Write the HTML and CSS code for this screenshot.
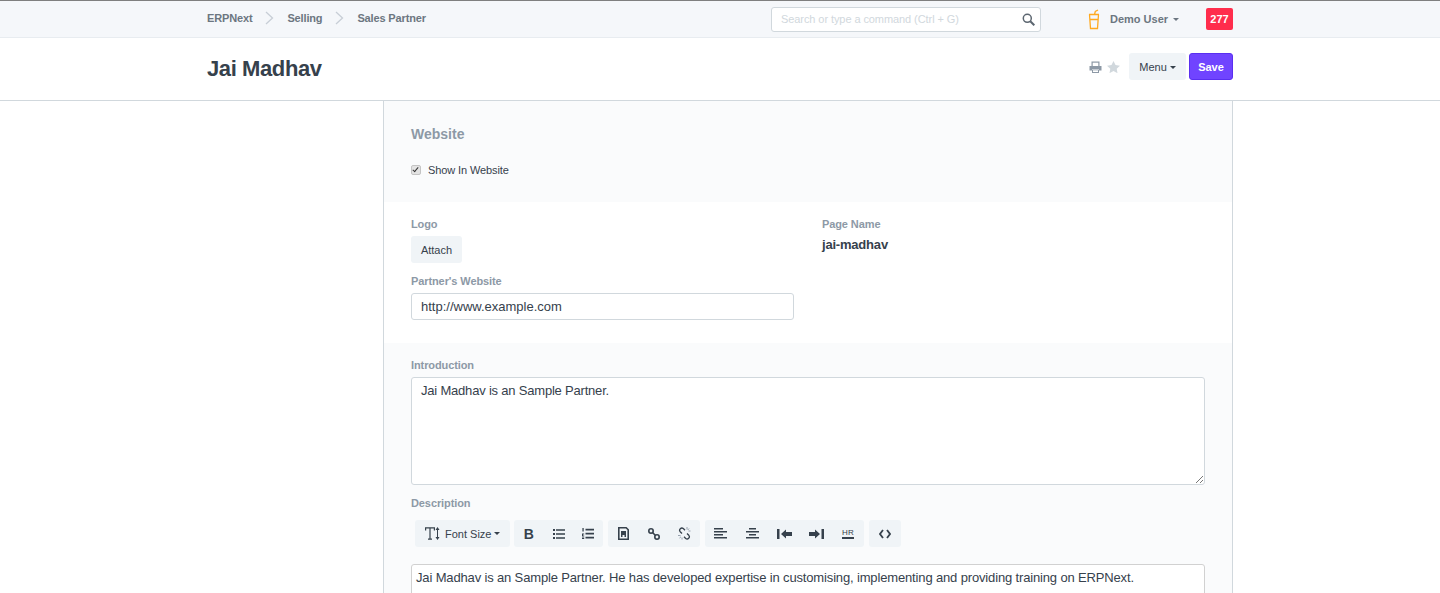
FILE: index.html
```html
<!DOCTYPE html>
<html lang="en">
<head>
    <meta charset="UTF-8">
    <title>Jai Madhav</title>
    <link rel="stylesheet" href="styles.css">
</head>
<body>
    <header class="navbar">
        <div class="wrap navbar-inner">
            <nav class="crumbs">
                <a>ERPNext</a>
                <svg class="crumb-sep" width="9" height="14" viewBox="0 0 9 14"><path d="M1 1l6.500 6-6.500 6" fill="none" stroke="#c8ced6" stroke-width="1.300"/></svg>
                <a>Selling</a>
                <svg class="crumb-sep" width="9" height="14" viewBox="0 0 9 14"><path d="M1 1l6.500 6-6.500 6" fill="none" stroke="#c8ced6" stroke-width="1.300"/></svg>
                <a>Sales Partner</a>
            </nav>
            <div class="search">
                <span>Search or type a command (Ctrl + G)</span>
                <svg width="13" height="13" viewBox="0 0 13 13"><circle cx="5.300" cy="5.300" r="4" fill="none" stroke="#5c6670" stroke-width="1.500"/><path d="M8.300 8.300l4 4" stroke="#5c6670" stroke-width="2"/></svg>
            </div>
            <div class="user">
                <svg width="12" height="21" viewBox="0 0 12 21"><path d="M1 5.500h10M1.500 5.500l1 14h7l1-14M1.800 10.500h8.400M6.500 5.500l.8-3 2.700-1.500" fill="none" stroke="#ffa91f" stroke-width="1.300"/></svg>
                <span class="user-name">Demo User</span>
                <i class="caret caret-grey"></i>
            </div>
            <div class="badge">277</div>
        </div>
    </header>

    <section class="title-bar">
        <div class="wrap title-inner">
            <h1>Jai Madhav</h1>
            <div class="actions">
                <svg class="print" width="13" height="12" viewBox="0 0 13 12"><path d="M2.500 5V.5h8V5h2v4.500H10V8H3v1.500H.5V5z" fill="#8d99a6"/><path d="M3.700 1.700h5.600V5H3.700z" fill="#fff"/><path d="M3 8.500h7v3.500H3z" fill="#8d99a6"/><path d="M4 9.300h5v1.700H4z" fill="#fff"/></svg>
                <svg class="star" width="13" height="12" viewBox="0 0 13 12"><path d="M6.500 0l2 4.100 4.500.6-3.300 3.100.8 4.400-4-2.200-4 2.200.8-4.400L0 4.700l4.500-.6z" fill="#d1d8dd"/></svg>
                <button class="btn btn-menu">Menu<i class="caret"></i></button>
                <button class="btn btn-save">Save</button>
            </div>
        </div>
    </section>

    <div class="wrap page-body">
        <main class="form-page">
            <section class="band band-tint band-website">
                <h2>Website</h2>
                <label class="check"><input type="checkbox" checked> Show In Website</label>
            </section>

            <section class="band band-fields">
                <div class="col">
                    <div class="field-label">Logo</div>
                    <button class="btn btn-attach">Attach</button>
                    <div class="field-label label-partner">Partner's Website</div>
                    <div class="input">http://www.example.com</div>
                </div>
                <div class="col">
                    <div class="field-label">Page Name</div>
                    <div class="page-name">jai-madhav</div>
                </div>
            </section>

            <section class="band band-tint band-intro">
                <div class="field-label">Introduction</div>
                <div class="input textarea">Jai Madhav is an Sample Partner.
                    <svg class="grip" width="9" height="9" viewBox="0 0 9 9"><path d="M1 8l7-7M5 8l3-3" stroke="#777" stroke-width="1"/></svg>
                </div>
                <div class="field-label label-desc">Description</div>
                <div class="toolbar">
                    <div class="tool-group group-font">
                        <span class="tool tool-font">
                            <svg width="15" height="13" viewBox="0 0 15 13"><path d="M.6 3.500V.8h8.800v2.700M5 .8v11.400M3 12.200h4" fill="none" stroke="#36414c" stroke-width="1.200"/><path d="M12.500 2v9" stroke="#36414c" stroke-width="1"/><path d="M10.500 3l2-3 2 3zM10.500 10l2 3 2-3z" fill="#36414c"/></svg>
                            <span>Font Size</span><i class="caret"></i>
                        </span>
                    </div>
                    <div class="tool-group group-style">
                        <span class="tool tool-bold">B</span>
                        <span class="tool">
                            <svg width="12" height="10" viewBox="0 0 12 10"><path d="M0 0h2v2H0zM0 4h2v2H0zM0 8h2v2H0zM3 .2h9v1.600H3zM3 4.200h9v1.600H3zM3 8.200h9v1.600H3z" fill="#36414c"/></svg>
                        </span>
                        <span class="tool">
                            <svg width="12" height="11" viewBox="0 0 12 11"><path d="M.4 0h1.300v3.500H.4zM0 5.500h2.200v1H1v1h1.200v1H0zM0 9.500h2.200V11H0zM3.500 .8H12v1.600H3.500zM3.500 4.800H12v1.600H3.500zM3.500 8.800H12v1.600H3.500z" fill="#36414c"/></svg>
                        </span>
                    </div>
                    <div class="tool-group group-link">
                        <span class="tool">
                            <svg width="11" height="13" viewBox="0 0 11 13"><path d="M.8.8h7.400l2 2v9.400H.8z" fill="none" stroke="#36414c" stroke-width="1.600"/><path d="M3 10V4h5v6H6.500V8h-2v2z" fill="#36414c"/></svg>
                        </span>
                        <span class="tool">
                            <svg width="12" height="12" viewBox="0 0 12 12"><circle cx="3" cy="3" r="2.200" fill="none" stroke="#36414c" stroke-width="1.600"/><circle cx="9" cy="9" r="2.200" fill="none" stroke="#36414c" stroke-width="1.600"/><path d="M4.500 4.500l3 3" stroke="#36414c" stroke-width="1.600"/></svg>
                        </span>
                        <span class="tool">
                            <svg width="13" height="13" viewBox="0 0 13 13"><path d="M4 6.500L2.200 4.700A2.200 2.200 0 0 1 5.300 1.600L7 3.300M9 6.500l1.800 1.800a2.200 2.200 0 0 1-3.100 3.100L6 9.700" fill="none" stroke="#36414c" stroke-width="1.300"/><path d="M9 0v2.500M11 1.500L9.800 3M12.500 4H10.500M0 8.500h2.500M1.500 11L3 9.800M4 12.500V10.500" stroke="#8d99a6" stroke-width="0.900"/></svg>
                        </span>
                    </div>
                    <div class="tool-group group-align">
                        <span class="tool">
                            <svg width="13" height="11" viewBox="0 0 13 11"><path d="M0 0h9v1.500H0zM0 3h13v1.500H0zM0 6h9v1.500H0zM0 9h13v1.500H0z" fill="#36414c"/></svg>
                        </span>
                        <span class="tool">
                            <svg width="13" height="11" viewBox="0 0 13 11"><path d="M3 0h7v1.500H3zM0 3h13v1.500H0zM3 6h7v1.500H3zM0 9h13v1.500H0z" fill="#36414c"/></svg>
                        </span>
                        <span class="tool">
                            <svg width="15" height="10" viewBox="0 0 15 10"><path d="M0 0h2.500v10H0zM4 5l5-4.500V3h6v4H9v2.500z" fill="#36414c"/></svg>
                        </span>
                        <span class="tool">
                            <svg width="15" height="10" viewBox="0 0 15 10"><path d="M12.500 0H15v10h-2.500zM11 5L6 .5V3H0v4h6v2.500z" fill="#36414c"/></svg>
                        </span>
                        <span class="tool tool-hr"><span>HR</span></span>
                    </div>
                    <div class="tool-group group-code">
                        <span class="tool">
                            <svg width="12" height="10" viewBox="0 0 12 10"><path d="M4 1L1 5l3 4M8 1l3 4-3 4" fill="none" stroke="#36414c" stroke-width="1.800"/></svg>
                        </span>
                    </div>
                </div>
                <div class="editor">Jai Madhav is an Sample Partner. He has developed expertise in customising, implementing and providing training on ERPNext.</div>
            </section>
        </main>
    </div>
</body>
</html>
```

FILE: styles.css
```css
html, body {
    height: 593px;
    overflow: hidden;
}

body {
    margin: 0;
    background: #fff;
    font-family: "Liberation Sans", Arial, sans-serif;
    font-size: 12px;
    color: #36414c;
}

.wrap {
    width: 1026px;
    margin: 0 auto;
    display: flex;
    align-items: center;
}

/* top bar */
.navbar {
    height: 36px;
    background: #f5f7fa;
    border-top: 1px solid #7f7f7f;
    border-bottom: 1px solid #e8ecf0;
}

.navbar-inner {
    height: 36px;
}

.crumbs {
    width: 564px;
    display: flex;
    align-items: center;
    margin-top: -3px;
    font-weight: bold;
    font-size: 11px;
    letter-spacing: -0.15px;
    color: #6c7680;
}

.crumb-sep {
    margin: 0 13px;
}

.search {
    width: 270px;
    height: 25px;
    box-sizing: border-box;
    background: #fff;
    border: 1px solid #d1d8dd;
    border-radius: 3px;
    display: flex;
    align-items: center;
    justify-content: space-between;
    padding: 0 5px 0 9px;
    color: #d1d8dd;
    font-size: 11px;
    letter-spacing: -0.08px;
}

.user {
    display: flex;
    align-items: center;
    margin-left: 47px;
    width: 118px;
    font-weight: bold;
    font-size: 11px;
    color: #6c7680;
}

.user-name {
    margin-left: 10px;
}

.badge {
    width: 27px;
    height: 22px;
    background: #ff2d4c;
    border-radius: 2px;
    color: #fff;
    font-weight: bold;
    font-size: 11px;
    line-height: 22px;
    text-align: center;
}

.caret {
    display: inline-block;
    margin-left: 3px;
    border-top: 3px solid #36414c;
    border-left: 3px solid transparent;
    border-right: 3px solid transparent;
    vertical-align: middle;
}

.caret-grey {
    margin-left: 5px;
    border-top-color: #6c7680;
}

/* title */
.title-bar {
    height: 62px;
    border-bottom: 1px solid #d1d8dd;
}

.title-inner {
    height: 62px;
    justify-content: space-between;
}

h1 {
    margin: 0;
    font-size: 22px;
    font-weight: bold;
    letter-spacing: -0.4px;
    color: #36414c;
}

.actions {
    display: flex;
    align-items: center;
    margin-top: -5px;
}

.print {
    margin-right: 5px;
}

.star {
    margin-right: 9px;
}

.btn {
    border: 1px solid transparent;
    border-radius: 3px;
    font-family: inherit;
    font-size: 11px;
    height: 27px;
    padding: 0;
    background: #f0f4f7;
    color: #36414c;
}

.btn-menu {
    width: 57px;
    margin-right: 3px;
}

.btn-save {
    width: 44px;
    background: #7044ff;
    border-color: #5a2ff0;
    color: #fff;
    font-weight: bold;
}

.btn-attach {
    display: block;
    width: 51px;
    margin-top: 5px;
}

/* form */
.page-body {
    align-items: flex-start;
    justify-content: flex-end;
}

.form-page {
    box-sizing: border-box;
    width: 850px;
    height: 492px;
    overflow: hidden;
    border-left: 1px solid #d1d8dd;
    border-right: 1px solid #d1d8dd;
}

.band {
    padding-left: 27px;
    padding-right: 27px;
}

.band-tint {
    background: #fafbfc;
}

.band-website {
    height: 101px;
    overflow: hidden;
}

h2 {
    margin: 25px 0 0;
    font-size: 14px;
    line-height: 17px;
    font-weight: bold;
    color: #8d99a6;
}

.check {
    display: flex;
    align-items: center;
    margin-top: 20px;
    font-size: 11px;
    line-height: 14px;
    letter-spacing: -0.1px;
}

.check input {
    appearance: none;
    box-sizing: border-box;
    position: relative;
    width: 10px;
    height: 10px;
    margin: 0 7px 0 0;
    background: #e3e3e3;
    border: 1px solid #c4c4c4;
    border-radius: 2px;
}

.check input::after {
    content: "";
    position: absolute;
    left: 2px;
    top: 0;
    width: 3px;
    height: 6px;
    border-right: 1.5px solid #333;
    border-bottom: 1.5px solid #333;
    box-sizing: border-box;
    transform: rotate(40deg);
}

.band-fields {
    height: 141px;
    box-sizing: border-box;
    padding-top: 15px;
    display: flex;
    gap: 28px;
}

.col {
    width: 383px;
}

.field-label {
    font-size: 11px;
    line-height: 14px;
    font-weight: bold;
    letter-spacing: -0.1px;
    color: #8d99a6;
}

.label-partner {
    margin-top: 11px;
}

.page-name {
    margin-top: 6px;
    font-size: 13px;
    line-height: 16px;
    font-weight: bold;
    letter-spacing: -0.2px;
}

.input {
    box-sizing: border-box;
    height: 27px;
    margin-top: 5px;
    padding: 0 9px;
    background: #fff;
    border: 1px solid #d1d8dd;
    border-radius: 3px;
    font-size: 13px;
    line-height: 25px;
}

.band-intro {
    padding-top: 15px;
    height: 250px;
}

.textarea {
    position: relative;
    height: 108px;
    letter-spacing: -0.2px;
}

.grip {
    position: absolute;
    right: 0;
    bottom: 0;
}

.label-desc {
    margin-top: 11px;
}

.toolbar {
    display: flex;
    gap: 5px;
    margin-top: 10px;
    margin-left: 4px;
}

.tool-group {
    display: flex;
    background: #f0f4f7;
    border-radius: 3px;
    height: 27px;
}

.group-font {
    width: 95px;
    margin-right: -1px;
}

.group-style {
    width: 89px;
}

.group-link {
    width: 92px;
}

.group-align {
    width: 159px;
}

.group-code {
    width: 32px;
}

.tool {
    flex: 1;
    display: flex;
    align-items: center;
    justify-content: center;
}

.tool-font {
    justify-content: flex-start;
    padding-left: 10px;
    font-size: 11px;
}

.tool-font span {
    margin-left: 5px;
}

.tool-bold {
    font-size: 14px;
    font-weight: bold;
}

.tool-hr span {
    font-size: 8px;
    line-height: 9px;
    letter-spacing: 0.4px;
    border-bottom: 2px solid #36414c;
}

.editor {
    box-sizing: border-box;
    height: 60px;
    margin-top: 17px;
    padding: 4px;
    background: #fff;
    border: 1px solid #d1d1d1;
    border-radius: 3px;
    font-size: 13px;
    line-height: 18px;
    letter-spacing: -0.15px;
}
```
